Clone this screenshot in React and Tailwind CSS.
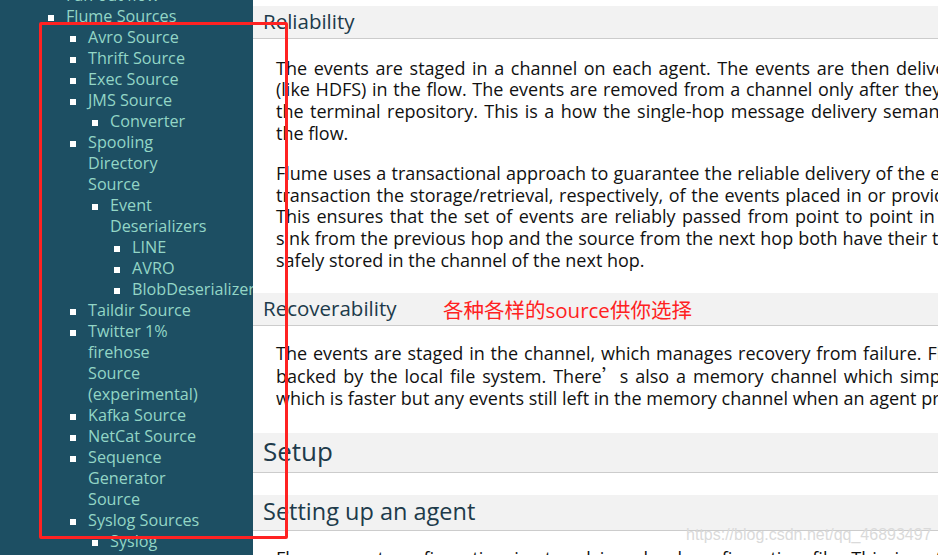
import React from "react";

const Item = ({ text, children }) => (
  <li className="flex">
    <span className="w-[22px] shrink-0">
      <span className="block w-[6px] h-[6px] bg-white mt-[9px] ml-[4px]" />
    </span>
    <div className="flex-1 min-w-0">
      <div>{text}</div>
      {children ? <ul>{children}</ul> : null}
    </div>
  </li>
);

const Para = ({ lines, className }) => (
  <div className={"ml-[23px] w-[1048px] text-[18px] leading-[21.7px] text-[#111111] " + className}>
    {lines.map((l, i) => (
      <div
        key={i}
        className={i < lines.length - 1 ? "text-justify [text-align-last:justify]" : "text-left"}
      >
        {l}
      </div>
    ))}
  </div>
);

const H3 = ({ children, className }) => (
  <h3
    className={
      "h-[33px] border-b border-[#cccccc] bg-[#f2f2f2] pl-[10px] pt-[3px] text-[20.5px] leading-[24px] text-[#203a4a] " +
      className
    }
  >
    {children}
  </h3>
);

export default function App() {
  return (
    <div className="relative flex h-[555px] w-[938px] overflow-hidden bg-white font-['Open_Sans','Noto_Sans_CJK_SC',sans-serif]">
      <aside className="w-[253px] shrink-0 overflow-hidden bg-[#1d4f63] pl-[44px] pr-[50px] text-[16.2px] leading-[21px] text-[#93d6c6]">
        <ul className="-mt-[15px]">
          <Item text="Fan out flow" />
          <Item text="Flume Sources">
            <Item text="Avro Source" />
            <Item text="Thrift Source" />
            <Item text="Exec Source" />
            <Item text="JMS Source">
              <Item text="Converter" />
            </Item>
            <Item text="Spooling Directory Source">
              <Item text="Event Deserializers">
                <Item text="LINE" />
                <Item text="AVRO" />
                <Item text="BlobDeserializer" />
              </Item>
            </Item>
            <Item text="Taildir Source" />
            <Item text="Twitter 1% firehose Source (experimental)" />
            <Item text="Kafka Source" />
            <Item text="NetCat Source" />
            <Item text="Sequence Generator Source" />
            <Item text="Syslog Sources">
              <Item text="Syslog" />
              <Item text="Multiport Syslog TCP Source" />
              <Item text="Syslog UDP Source" />
            </Item>
          </Item>
        </ul>
      </aside>

      <main className="flex-1 min-w-0 overflow-hidden pt-[6px]">
        <H3 className="">Reliability</H3>
        <Para
          className="mt-[18.5px]"
          lines={[
            "The events are staged in a channel on each agent. The events are then delivered to the next agent or terminal repository",
            "(like HDFS) in the flow. The events are removed from a channel only after they are stored in the channel of next agent or in",
            "the terminal repository. This is a how the single-hop message delivery semantics in Flume provide end-to-end reliability of",
            "the flow.",
          ]}
        />
        <Para
          className="mt-[18.5px]"
          lines={[
            "Flume uses a transactional approach to guarantee the reliable delivery of the events. The sources and sinks encapsulate in a",
            "transaction the storage/retrieval, respectively, of the events placed in or provided by a transaction provided by the channel.",
            "This ensures that the set of events are reliably passed from point to point in the flow. In the case of a multi-hop flow, the",
            "sink from the previous hop and the source from the next hop both have their transactions running to ensure that the data is",
            "safely stored in the channel of the next hop.",
          ]}
        />
        <H3 className="mt-[21.5px]">Recoverability</H3>
        <Para
          className="mt-[17.5px]"
          lines={[
            "The events are staged in the channel, which manages recovery from failure. Flume supports a durable file channel which is",
            <>
              backed by the local file system. There
              <span className="font-['Noto_Sans_CJK_SC',sans-serif]">’</span>s also a memory channel which simply
              stores the events in an in-memory queue,
            </>,
            "which is faster but any events still left in the memory channel when an agent process dies can't be recovered.",
          ]}
        />
        <h1 className="mt-[23.5px] h-[40px] border-b border-[#cccccc] bg-[#f2f2f2] pl-[10px] pt-[3px] text-[26px] leading-[30px] text-[#203a4a]">
          Setup
        </h1>
        <h2 className="mt-[22px] h-[36px] border-b border-[#cccccc] bg-[#f2f2f2] pl-[10px] pt-[2px] text-[23.5px] leading-[28px] text-[#203a4a]">
          Setting up an agent
        </h2>
        <Para
          className="mt-[17px]"
          lines={[
            "Flume agent configuration is stored in a local configuration file. This is a text file that follows the Java properties file",
            "format. Configurations for one or more agents can be specified in the same configuration file.",
          ]}
        />
      </main>

      <div className="pointer-events-none absolute left-[443px] top-[295px] whitespace-nowrap text-[20.5px] leading-[28px] text-[#ff2121] font-['Noto_Sans_CJK_SC',sans-serif]">
        各种各样的<span className="font-['Open_Sans',sans-serif]">source</span>供你选择
      </div>

      <div className="pointer-events-none absolute left-[686px] top-[526px] whitespace-nowrap text-[16px] leading-[18px] text-[#dadada] font-['Liberation_Sans',Arial,sans-serif]">
        https://blog.csdn.net/qq_46893497
      </div>

      <div className="pointer-events-none absolute left-[39px] top-[22px] h-[517px] w-[249px] rounded-[2px] border-[3px] border-[#ff2222]" />
    </div>
  );
}
